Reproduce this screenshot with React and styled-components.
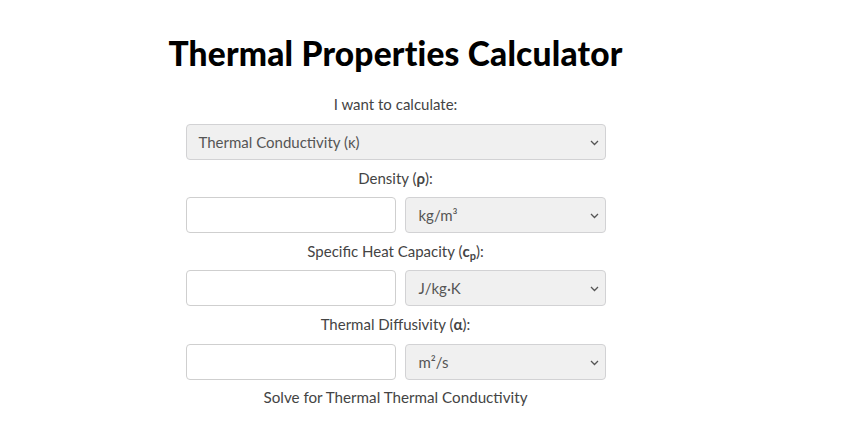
import React from "react";
import styled, { createGlobalStyle } from "styled-components";

const Global = createGlobalStyle`
  html, body { margin: 0; padding: 0; background: #ffffff; }
  body { font-family: Lato, "Liberation Sans", sans-serif; }
`;

const Page = styled.div`
  width: 791px;
  display: flex;
  flex-direction: column;
  align-items: center;
  padding-top: 30px;
`;

const Title = styled.h1`
  margin: 0;
  font-family: Lato, "Liberation Sans", sans-serif;
  font-weight: 900;
  font-size: 33.5px;
  line-height: 46px;
  color: #000;
  letter-spacing: 0.2px;
`;

const Form = styled.div`
  width: 420px;
  display: flex;
  flex-direction: column;
  align-items: stretch;
  margin-top: 18px;
`;

const Label = styled.div`
  font-size: 15px;
  line-height: 20px;
  color: #444;
  text-align: center;
  padding: ${(p) => (p.$first ? "0 0 10px" : p.$tall ? "8px 0 10px" : "8px 0 9px")};

  sub {
    font-size: 11px;
    line-height: 0;
    vertical-align: -3px;
  }
`;

const Row = styled.div`
  display: flex;
  gap: 9px;
  height: 36px;
`;

const Field = styled.input`
  box-sizing: border-box;
  width: 210px;
  height: 36px;
  border: 1px solid #cfcfcf;
  border-radius: 4px;
  background: #fff;
  padding: 0 12px;
  font-family: inherit;
  font-size: 15px;
  outline: none;
`;

const SelectBox = styled.div`
  position: relative;
  box-sizing: border-box;
  flex: 1;
  height: 36px;
  border: 1px solid #d2d2d4;
  border-radius: 4px;
  background: #f0f0f0;
  display: flex;
  align-items: center;
  padding: 0 ${(p) => (p.$wide ? "12px" : "13px")};
  font-size: 15px;
  color: #555;
`;

const Chevron = styled.svg`
  position: absolute;
  right: 6px;
  top: 50%;
  margin-top: -3px;
  width: 9px;
  height: 7px;
`;

const Footer = styled.div`
  font-size: 15.2px;
  line-height: 20px;
  color: #444;
  text-align: center;
  padding-top: 7px;
`;

const Select = ({ children, wide }) => (
  <SelectBox $wide={wide}>
    {children}
    <Chevron viewBox="0 0 9 7">
      <path d="M1 2 L4.5 5.5 L8 2" fill="none" stroke="#555" strokeWidth="1.3" />
    </Chevron>
  </SelectBox>
);

export default function App() {
  return (
    <>
      <Global />
      <Page>
        <Title>Thermal Properties Calculator</Title>
        <Form>
          <Label $first>I want to calculate:</Label>
          <Row>
            <Select wide>Thermal Conductivity (κ)</Select>
          </Row>
          <Label>
            Density (<b>ρ</b>):
          </Label>
          <Row>
            <Field />
            <Select>kg/m³</Select>
          </Row>
          <Label>
            Specific Heat Capacity (<b>c<sub>p</sub></b>):
          </Label>
          <Row>
            <Field />
            <Select>J/kg·K</Select>
          </Row>
          <Label $tall>
            Thermal Diffusivity (<b>α</b>):
          </Label>
          <Row>
            <Field />
            <Select>m²/s</Select>
          </Row>
          <Footer>Solve for Thermal Thermal Conductivity</Footer>
        </Form>
      </Page>
    </>
  );
}
